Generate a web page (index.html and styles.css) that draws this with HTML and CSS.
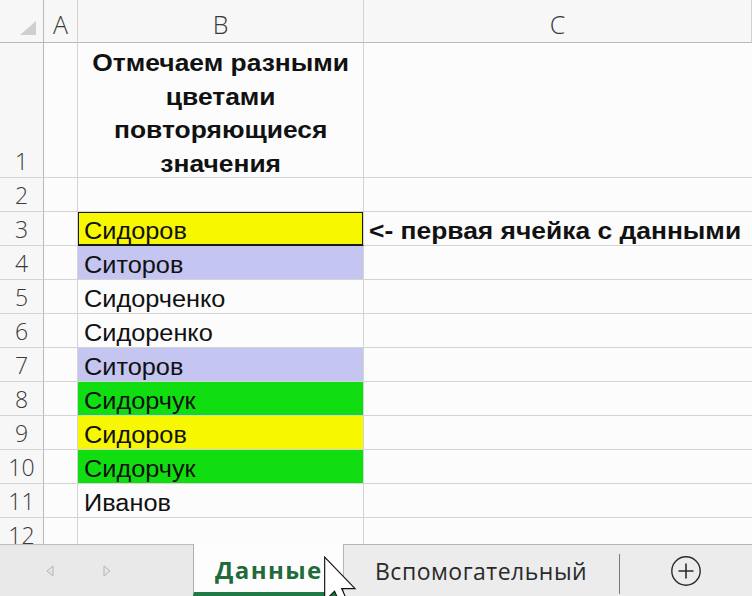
FILE: index.html
```html
<!DOCTYPE html>
<html lang="ru">
<head>
<meta charset="utf-8">
<title>Excel</title>
<link rel="stylesheet" href="styles.css">
</head>
<body>
<div class="window">
  <div class="sheet">
    <div class="hd corner">
      <svg class="corner-tri" width="16" height="14" viewBox="0 0 16 14"><polygon points="16,0 16,14 0,14" fill="#cfcfcf"/></svg>
    </div>
    <div class="hd col">A</div>
    <div class="hd col">B</div>
    <div class="hd col last">C</div>

    <div class="rh r1">1</div>
    <div class="c"></div>
    <div class="c title"><div class="title-text"><span>Отмечаем разными</span><span>цветами</span><span>повторяющиеся</span><span>значения</span></div></div>
    <div class="c last"></div>

    <div class="rh">2</div><div class="c"></div><div class="c"></div><div class="c last"></div>

    <div class="rh">3</div><div class="c"></div><div class="c v yellow sel"><span class="t">Сидоров</span></div><div class="c v note last"><span class="t">&lt;- первая ячейка с данными</span></div>

    <div class="rh">4</div><div class="c"></div><div class="c v lav"><span class="t">Ситоров</span></div><div class="c last"></div>
    <div class="rh">5</div><div class="c"></div><div class="c v"><span class="t">Сидорченко</span></div><div class="c last"></div>
    <div class="rh">6</div><div class="c"></div><div class="c v"><span class="t">Сидоренко</span></div><div class="c last"></div>
    <div class="rh">7</div><div class="c"></div><div class="c v lav"><span class="t">Ситоров</span></div><div class="c last"></div>
    <div class="rh">8</div><div class="c"></div><div class="c v green"><span class="t">Сидорчук</span></div><div class="c last"></div>
    <div class="rh">9</div><div class="c"></div><div class="c v yellow"><span class="t">Сидоров</span></div><div class="c last"></div>
    <div class="rh">10</div><div class="c"></div><div class="c v green"><span class="t">Сидорчук</span></div><div class="c last"></div>
    <div class="rh">11</div><div class="c"></div><div class="c v"><span class="t">Иванов</span></div><div class="c last"></div>
    <div class="rh">12</div><div class="c"></div><div class="c"></div><div class="c last"></div>
  </div>

  <div class="tabbar">
    <div class="nav">
      <svg width="8" height="12" viewBox="0 0 8 12"><polygon points="7,1 7,11 1,6" fill="#e4e4e4" stroke="#b5b5b5" stroke-width="1"/></svg>
      <svg width="8" height="12" viewBox="0 0 8 12"><polygon points="1,1 1,11 7,6" fill="#e4e4e4" stroke="#b5b5b5" stroke-width="1"/></svg>
    </div>
    <div class="tab active">Данные</div>
    <div class="rest">
      <div class="tab other">Вспомогательный</div>
      <div class="sep"></div>
      <div class="add">
        <svg width="32" height="32" viewBox="0 0 32 32"><circle cx="16" cy="16" r="14.2" fill="none" stroke="#2b2b2b" stroke-width="1.4"/><path d="M16 8.5v15M8.5 16h15" stroke="#2b2b2b" stroke-width="1.6"/></svg>
      </div>
    </div>
  </div>

  <svg class="cursor" width="34" height="52" viewBox="0 0 12 19">
    <polygon points="0.4,0.4 0.4,16.4 4,12.9 6.8,18.9 9.3,17.8 6.6,11.9 11.5,11.9" fill="#ffffff" stroke="#111" stroke-width="0.42" stroke-linejoin="miter"/>
  </svg>
</div>
</body>
</html>
```

FILE: styles.css
```css
* { box-sizing: border-box; }
html, body { margin: 0; padding: 0; }
body { width: 752px; height: 596px; overflow: hidden; background: #fbfbfb; }

.window { position: relative; width: 752px; height: 596px; overflow: hidden; }

.sheet {
  display: grid;
  grid-template-columns: 44px 34px 286px 1fr;
  grid-template-rows: 43px 135px repeat(11, 34px);
  height: 544px;
  overflow: hidden;
  background: #fcfcfc;
}

.hd {
  background: #f7f7f7;
  border-right: 1px solid #d2d2d2;
  border-bottom: 1px solid #b9b9b9;
  font-family: "Open Sans", "Noto Sans", sans-serif;
  font-weight: 300;
  font-size: 25px;
  color: #3a3a3a;
  display: flex;
  align-items: center;
  justify-content: center;
  padding-top: 6px;
}
.hd.corner { position: relative; border-right-color: #b9b9b9; }
.corner-tri { position: absolute; right: 7px; bottom: 7px; }

.rh {
  background: #f7f7f7;
  border-right: 1px solid #b9b9b9;
  border-bottom: 1px solid #d4d4d4;
  font-family: "Open Sans", "Noto Sans", sans-serif;
  font-weight: 300;
  font-size: 23px;
  color: #3a3a3a;
  display: flex;
  align-items: center;
  justify-content: center;
}
.rh.r1 { align-items: flex-end; }

.c {
  border-right: 1px solid #d4d4d4;
  border-bottom: 1px solid #d4d4d4;
  font-family: "Liberation Sans", Arial, sans-serif;
  font-size: 23px;
  color: #111;
  white-space: nowrap;
}
.c.last { border-right: none; }

.title {
  display: flex;
  flex-direction: column;
  justify-content: flex-end;
  align-items: center;
  font-weight: bold;
  font-size: 24px;
}
.title-text {
  display: flex;
  flex-direction: column;
  align-items: center;
  line-height: 33.5px;
  transform: translateY(3px) scaleX(1.1);
}
.title-text span { display: block; }

.v {
  display: flex;
  align-items: center;
  padding-left: 6px;
  padding-top: 5px;
}
.t {
  display: inline-block;
  transform-origin: left center;
  transform: scaleX(1.1);
}
.yellow { background: #f7f700; }
.lav { background: #c4c5f1; }
.green { background: #10de10; }
.sel { box-shadow: inset 0 0 0 1px #1a1a1a; border-bottom-color: #1a1a1a; }

.note {
  padding-left: 5px;
  font-weight: bold;
  font-size: 24px;
  overflow: visible;
}

.tabbar {
  display: flex;
  height: 52px;
  font-family: "Open Sans", "Noto Sans", sans-serif;
}
.nav {
  width: 193px;
  background: #e9e9e9;
  border-top: 1px solid #bdbdbd;
  display: flex;
  align-items: center;
  padding-left: 46px;
  gap: 49px;
}
.tab.active {
  width: 150px;
  background: #fdfdfd;
  border-left: 1px solid #b0b0b0;
  border-bottom: 4px solid #1f7a45;
  color: #1f6b3c;
  font-weight: 700;
  font-size: 24px;
  letter-spacing: 1.4px;
  display: flex;
  align-items: center;
  padding-left: 21px;
  padding-top: 2px;
}
.rest {
  flex: 1;
  display: flex;
  align-items: center;
  background: #ececec;
  border-top: 1px solid #b5b5b5;
  border-left: 1px solid #b5b5b5;
}
.tab.other {
  width: 275px;
  padding-left: 31px;
  font-size: 23px;
  letter-spacing: 0.5px;
  color: #2a2a2a;
}
.sep {
  width: 1px;
  height: 40px;
  background: #7a7a7a;
  margin-top: 6px;
}
.add {
  flex: 1;
  display: flex;
  justify-content: center;
}

.cursor { position: absolute; left: 323px; top: 556px; }
```
